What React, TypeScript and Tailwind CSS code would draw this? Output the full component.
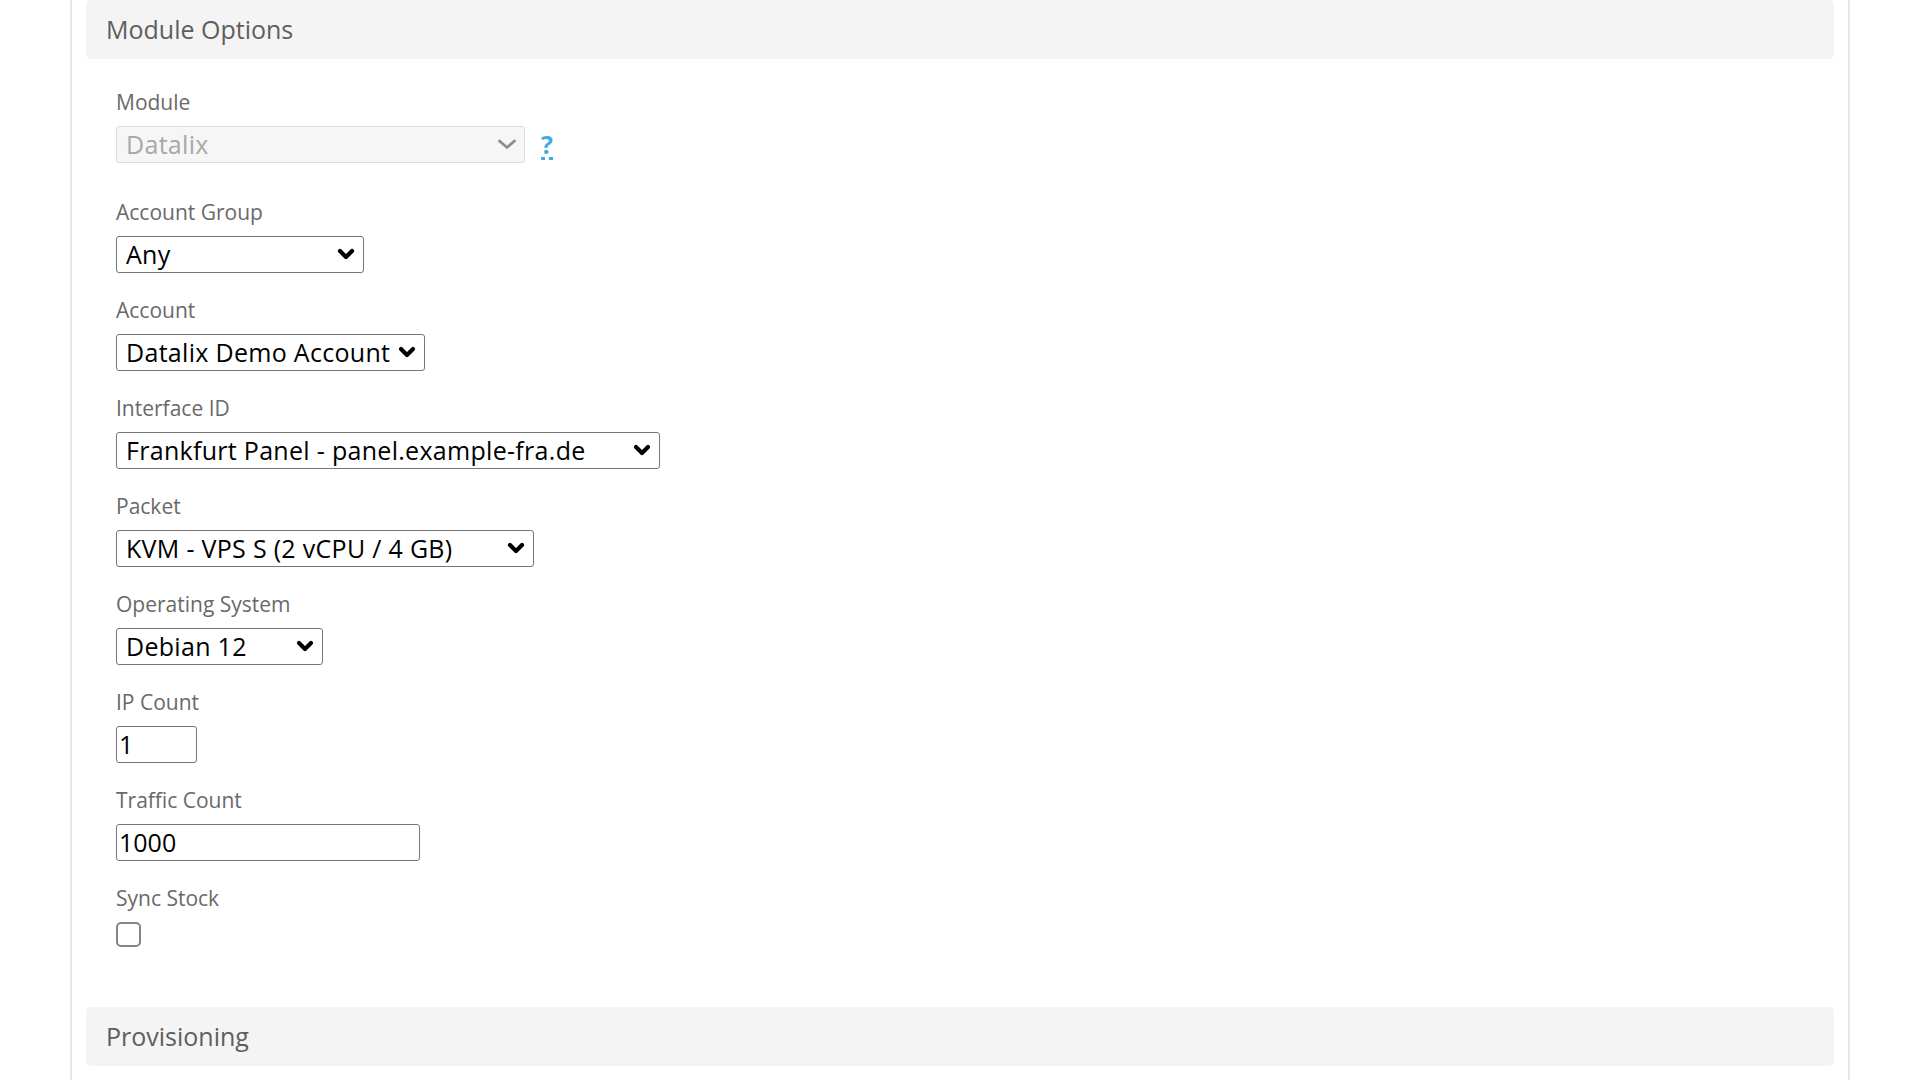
import type { ReactNode } from "react";

// Réglages du module produit : réplique de l'onglet "Module Settings" d'une fiche produit.
const font = "font-['Open_Sans','Noto_Sans',sans-serif]";

function Chevron({ disabled = false }: { disabled?: boolean }) {
  if (disabled) {
    return (
      <svg
        width="20"
        height="11"
        viewBox="0 0 20 11"
        className="pointer-events-none absolute right-[8px] top-[13px]"
      >
        <path d="M2.5 2 L10 8.5 L17.5 2" fill="none" stroke="#8c8c8c" strokeWidth="2.8" strokeLinecap="round" strokeLinejoin="round" />
      </svg>
    );
  }
  return (
    <svg
      width="18"
      height="12"
      viewBox="0 0 18 12"
      className="pointer-events-none absolute right-[9px] top-[12px]"
    >
      <path d="M3 3 L9 9 L15 3" fill="none" stroke="#000" strokeWidth="4.2" strokeLinecap="round" strokeLinejoin="round" />
    </svg>
  );
}

function Select({ value, width, disabled = false }: { value: string; width: string; disabled?: boolean }) {
  return (
    <div className={`relative ${width}`}>
      <select
        disabled={disabled}
        defaultValue={value}
        className={
          disabled
            ? "h-[37px] w-full appearance-none rounded-[3px] border border-[#dcdcdc] bg-[#f6f6f6] pl-[9px] text-[25px] leading-[35px] tracking-[0.3px] text-[#a8a8a8]"
            : "h-[37px] w-full appearance-none rounded-[3px] border border-[#767676] bg-white pl-[9px] text-[25px] leading-[35px] tracking-[0.3px] text-black"
        }
      >
        <option>{value}</option>
      </select>
      <Chevron disabled={disabled} />
    </div>
  );
}

function Field({ label, children, extra = false }: { label: string; children: ReactNode; extra?: boolean }) {
  return (
    <div className={extra ? "mb-[34px]" : "mb-[22px]"}>
      <label className="block h-[30px] text-[21px] leading-[30px] text-[#696969]">{label}</label>
      <div className="mt-[9px]">{children}</div>
    </div>
  );
}

function SectionHeader({ title }: { title: string }) {
  return (
    <div className="h-[59px] rounded-[5px] bg-[#f4f4f4] pl-[20px] text-[25px] leading-[59px] text-[#5e5e5e]">
      {title}
    </div>
  );
}

export default function App() {
  return (
    <div className={`min-h-screen bg-white ${font}`}>
      <div className="ml-[70px] h-[1080px] w-[1780px] overflow-hidden border-x-2 border-[#e6e6e6] px-[14px]">
        <SectionHeader title="Module Options" />

        <div className="pl-[30px] pt-[28px]">
          <Field label="Module" extra>
            <div className="flex items-start">
              <Select value="Datalix" width="w-[409px]" disabled />
              <a
                href="#"
                className="ml-[16px] mt-[5px] border-b-[3px] border-dotted border-[#3eacdd] text-[25px] font-bold leading-[26px] text-[#3eacdd]"
              >
                ?
              </a>
            </div>
          </Field>

          <Field label="Account Group">
            <Select value="Any" width="w-[248px]" />
          </Field>

          <Field label="Account">
            <Select value="Datalix Demo Account" width="w-[309px]" />
          </Field>

          <Field label="Interface ID">
            <Select value="Frankfurt Panel - panel.example-fra.de" width="w-[544px]" />
          </Field>

          <Field label="Packet">
            <Select value="KVM - VPS S (2 vCPU / 4 GB)" width="w-[418px]" />
          </Field>

          <Field label="Operating System">
            <Select value="Debian 12" width="w-[207px]" />
          </Field>

          <Field label="IP Count">
            <input
              type="text"
              defaultValue="1"
              className="h-[37px] w-[81px] rounded-[3px] border border-[#767676] px-[2px] text-[25px] text-black"
            />
          </Field>

          <Field label="Traffic Count">
            <input
              type="text"
              defaultValue="1000"
              className="h-[37px] w-[304px] rounded-[3px] border border-[#767676] px-[2px] text-[25px] text-black"
            />
          </Field>

          <div className="mb-[60px]">
            <label className="block h-[30px] text-[21px] leading-[30px] text-[#696969]">Sync Stock</label>
            <input
              type="checkbox"
              className="mt-[9px] block h-[25px] w-[25px] appearance-none rounded-[5px] border-2 border-[#858585] bg-white"
            />
          </div>
        </div>

        <SectionHeader title="Provisioning" />
      </div>
    </div>
  );
}
